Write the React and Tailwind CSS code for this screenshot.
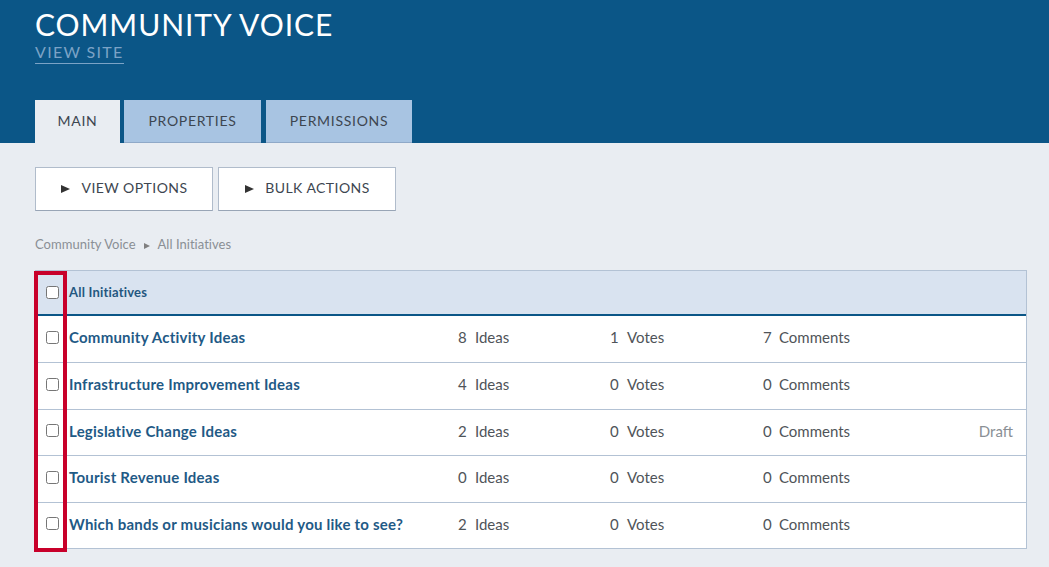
const rows = [
  ["Community Activity Ideas", 8, 1, 7, ""],
  ["Infrastructure Improvement Ideas", 4, 0, 0, ""],
  ["Legislative Change Ideas", 2, 0, 0, "Draft"],
  ["Tourist Revenue Ideas", 0, 0, 0, ""],
  ["Which bands or musicians would you like to see?", 2, 0, 0, ""],
];

function Box() {
  return <span className="block w-[13px] h-[13px] bg-white border border-[#767676] rounded-[2.5px] shrink-0" />;
}

function Stat({ n, label, w, nw }) {
  return (
    <div className={`flex text-[15px] text-[#4f5459] ${w}`}>
      <span className={nw}>{n}</span>
      <span>{label}</span>
    </div>
  );
}

export default function App() {
  return (
    <div className="w-[1049px] h-[567px] overflow-hidden bg-[#e9edf2] font-['Lato','Noto_Sans',sans-serif]">
      <header className="h-[143px] bg-[#0b5687] pl-[35px] flex flex-col">
        <h1 className="text-[30px] leading-[36px] mt-[6px] text-white tracking-[0.95px] font-normal">COMMUNITY VOICE</h1>
        <a className="self-start text-[16px] leading-[20px] pb-[1px] text-[#7ba3c6] tracking-[1.3px] font-normal border-b border-[#7ba3c6]">VIEW SITE</a>
        <nav className="mt-auto flex text-[14px] tracking-[0.7px] text-[#3d4650]">
          <div className="w-[85px] h-[43px] pb-[2px] bg-[#e9edf2] flex items-center justify-center">MAIN</div>
          <div className="ml-[4px] w-[137px] h-[43px] pb-[1px] bg-[#a8c4e2] border-b border-[#8fa9c8] flex items-center justify-center">PROPERTIES</div>
          <div className="ml-[5px] w-[146px] h-[43px] pb-[1px] bg-[#a8c4e2] border-b border-[#8fa9c8] flex items-center justify-center">PERMISSIONS</div>
        </nav>
      </header>

      <div className="px-[35px] pt-[24px] relative">
        <div className="flex gap-[5px]">
          {["VIEW OPTIONS", "BULK ACTIONS"].map((t) => (
            <button key={t} className="w-[178px] h-[44px] pb-[3px] pl-[1px] bg-white border border-[#b0bccb] border-b-[#98a5b6] flex items-center justify-center text-[14px] tracking-[0.45px] text-[#3d4650]">
              <span className="w-0 h-0 mt-[3px] border-y-[4.5px] border-y-transparent border-l-[9px] border-l-[#333] mr-[11px]" />
              {t}
            </button>
          ))}
        </div>

        <div className="mt-[25px] h-[18px] flex items-center text-[13px] tracking-[0.03px] text-[#8a8f95]">
          <span>Community Voice</span>
          <span className="mx-[8px] mt-[1px] w-0 h-0 border-y-[3.5px] border-y-transparent border-l-[6px] border-l-[#808080]" />
          <span>All Initiatives</span>
        </div>

        <div className="mt-[16px] w-[992px] border border-[#b3c2d4] bg-white">
          <div className="h-[45px] bg-[#d9e3f0] border-b-2 border-[#0b5687] flex items-center pl-[10px]">
            <Box />
            <span className="ml-[10px] text-[13px] font-bold text-[#24577f] tracking-[0.2px]">All Initiatives</span>
          </div>
          {rows.map(([t, a, b, c, d], i) => (
            <div key={t} className={`h-[46.4px] pb-[3px] flex items-center pl-[10px] pr-[13px] ${i ? "border-t border-[#b3c2d4]" : ""}`}>
              <Box />
              <span className="ml-[10px] w-[389px] text-[15px] font-bold text-[#1f5a86] tracking-[0.23px] whitespace-nowrap">{t}</span>
              <Stat n={a} label="Ideas" w="w-[152px]" nw="w-[17px]" />
              <Stat n={b} label="Votes" w="w-[153px]" nw="w-[17px]" />
              <Stat n={c} label="Comments" w="w-[150px]" nw="w-[16px]" />
              <span className="ml-auto text-[15px] text-[#8a8f95]">{d}</span>
            </div>
          ))}
        </div>

        <div className="absolute left-[34px] top-[128px] w-[33px] h-[281px] border-[4px] border-[#c8002a] pointer-events-none" />
      </div>
    </div>
  );
}
